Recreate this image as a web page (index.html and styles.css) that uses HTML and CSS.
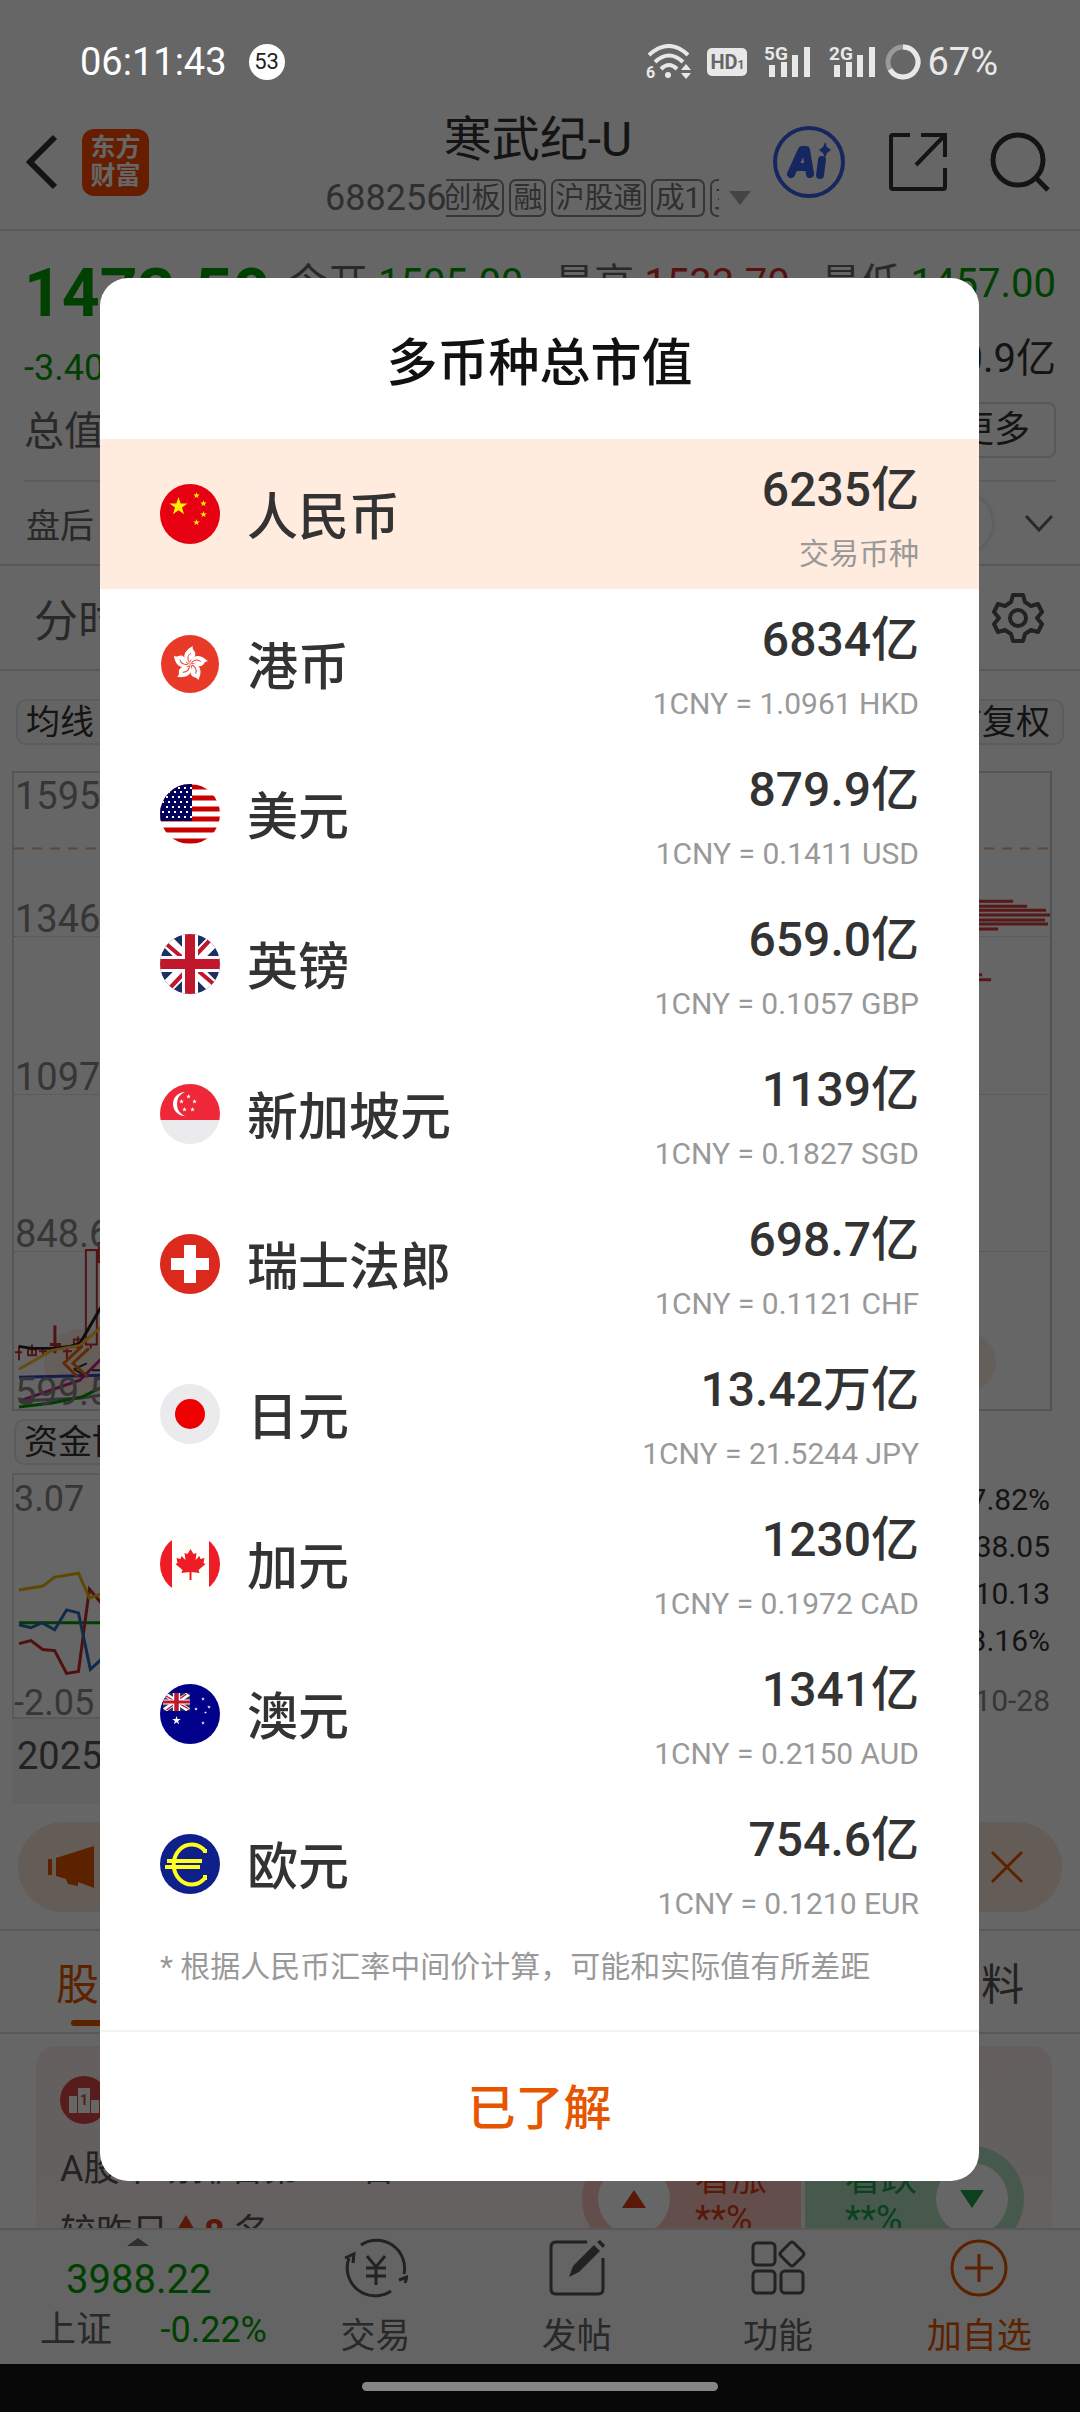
FILE: index.html
```html
<!DOCTYPE html>
<html lang="zh-CN">
<head>
    <meta charset="UTF-8">
    <meta name="viewport" content="width=device-width, initial-scale=1.0">
    <title>寒武纪-U 多币种总市值</title>
    <link rel="stylesheet" href="styles.css">
</head>
<body>
    <!-- 公用图形 -->
    <svg class="sprite" aria-hidden="true">
        <symbol id="star" viewBox="-1 -1 2 2">
            <polygon points="0,-1 .225,-.309 .951,-.309 .363,.118 .588,.809 0,.382 -.588,.809 -.363,.118 -.951,-.309 -.225,-.309"/>
        </symbol>
        <symbol id="jack" viewBox="0 0 60 60" preserveAspectRatio="none">
            <rect width="60" height="60" fill="#1e2f63"/>
            <path d="M4 4 56 56M56 4 4 56" stroke="#fff" stroke-width="13"/>
            <path d="M4 8 24 25M52 4 34 23M8 56 26 37M56 52 36 35" stroke="#c0172d" stroke-width="4"/>
            <path d="M30 0V60M0 30H60" stroke="#fff" stroke-width="16"/>
            <path d="M30 0V60M0 30H60" stroke="#c0172d" stroke-width="10"/>
        </symbol>
    </svg>

    <div class="status-bar">
        <div class="status-left">
            <span class="time">06:11:43</span>
            <span class="count">53</span>
        </div>
        <div class="status-right">
            <svg class="wifi" viewBox="0 0 46 36" fill="none" stroke="#e8e8e8" stroke-width="4">
                <path d="M3 11Q23-7 42 11M9 18Q23 5 37 18M15 25Q23 17 31 25"/>
                <circle cx="22" cy="31" r="3" fill="#e8e8e8" stroke="none"/>
                <path d="M35 26l5-6 5 6zM35 29l5 6 5-6z" fill="#e8e8e8" stroke="none"/>
                <text x="0" y="34" class="tiny">6</text>
            </svg>
            <span class="hd">HD<small>1</small></span>
            <svg class="signal" viewBox="0 0 48 36" fill="#e8e8e8">
                <text x="0" y="16" class="net">5G</text>
                <path d="M5 21h6v12h-6zM17 18h6v15h-6zM28 11h6v22h-6zM40 3h6v30h-6z"/>
            </svg>
            <svg class="signal" viewBox="0 0 48 36" fill="#e8e8e8">
                <text x="0" y="16" class="net">2G</text>
                <path d="M5 21h6v12h-6zM17 18h6v15h-6zM28 11h6v22h-6zM40 3h6v30h-6z"/>
            </svg>
            <svg class="battery" viewBox="0 0 36 36" fill="none" stroke-width="5">
                <circle cx="18" cy="18" r="15" stroke="#999"/>
                <path d="M18 3A15 15 0 1 1 5 25.5" stroke="#e8e8e8"/>
            </svg>
            <span class="percent">67%</span>
        </div>
    </div>

    <header class="top-bar">
        <div class="top-left">
            <button class="icon-btn" aria-label="返回">
                <svg width="32" height="56" viewBox="0 0 32 56" fill="none" stroke="#333" stroke-width="6"><path d="M29 3 4 28l25 25"/></svg>
            </button>
            <span class="logo">东方<br>财富</span>
        </div>
        <div class="stock">
            <h1>寒武纪-U</h1>
            <div class="stock-sub">
                <span class="code">688256</span>
                <div class="tags">
                    <span class="tag">科创板</span>
                    <span class="tag">融</span>
                    <span class="tag">沪股通</span>
                    <span class="tag">成1</span>
                    <span class="tag">主</span>
                </div>
                <span class="drop"></span>
            </div>
        </div>
        <div class="top-right">
            <button class="icon-btn" aria-label="AI">
                <svg width="74" height="74" viewBox="0 0 74 74">
                    <circle cx="37" cy="37" r="34" fill="none" stroke="#3763f0" stroke-width="4"/>
                    <path d="M19 49 30 25h4l4 24M24 42h13" fill="none" stroke="#3763f0" stroke-width="8" stroke-linejoin="round" stroke-linecap="round"/>
                    <path d="M50 35l-2 15" stroke="#3763f0" stroke-width="8" stroke-linecap="round"/>
                    <path d="M53 17l2 5 4 3-4 3-2 5-2-5-4-3 4-3z" fill="#3763f0"/>
                </svg>
            </button>
            <button class="icon-btn" aria-label="分享">
                <svg width="60" height="60" viewBox="0 0 60 60" fill="none" stroke="#333" stroke-width="4"><path d="M22 3H5q-2 0-2 2v50q0 2 2 2h50q2 0 2-2V36M33 3h24v22M57 3 28 33"/></svg>
            </button>
            <button class="icon-btn" aria-label="搜索">
                <svg width="60" height="60" viewBox="0 0 60 60" fill="none" stroke="#333" stroke-width="5"><circle cx="28" cy="28" r="25"/><path d="M46 46l12 12"/></svg>
            </button>
        </div>
    </header>

    <main>
        <section class="quote">
            <div class="quote-left">
                <strong class="price">1473.50</strong>
                <span class="change">-3.40%</span>
                <span class="total">总值</span>
            </div>
            <div class="quote-right">
                <div class="line">
                    <span>今开 <b class="green">1505.00</b></span>
                    <span>最高 <b class="red">1533.70</b></span>
                    <span>最低 <b class="green">1457.00</b></span>
                </div>
                <div class="line end"><span class="dark">180.9亿</span></div>
                <div class="line end"><button class="more">更多</button></div>
            </div>
        </section>

        <section class="after">
            <span>盘后</span>
            <span class="knob"></span>
            <svg width="30" height="18" viewBox="0 0 30 18" fill="none" stroke="#666" stroke-width="3"><path d="M2 2l13 14L28 2"/></svg>
        </section>

        <nav class="periods">
            <span>分时</span>
            <svg width="52" height="52" viewBox="0 0 52 52" fill="none" stroke="#555" stroke-width="4" stroke-linejoin="round">
                <path d="M21 3h10l2 7 6 4 7-2 4 8-5 6 5 6-4 8-7-2-6 4-2 7H21l-2-7-6-4-7 2-4-8 5-6-5-6 4-8 7 2 6-4z"/>
                <circle cx="26" cy="26" r="8"/>
            </svg>
        </nav>

        <div class="chips">
            <button class="chip">均线</button>
            <button class="chip">前复权</button>
        </div>

        <section class="chart">
            <svg class="plot" viewBox="0 0 1038 640" preserveAspectRatio="none" fill="none" stroke-width="2">
                <ellipse cx="68" cy="594" rx="38" ry="35" fill="#fdeee6"/>
                <circle cx="954" cy="593" r="30" fill="#fdeee6"/>
                <path d="M0 76H1038" stroke="#e8b48a" stroke-dasharray="10 8"/>
                <g stroke="#d03030">
                    <path d="M5 576v15M1 583h7M14 580h8v6h-8zM18 575v12M25 582h8M29 578v8M53 578v13M49 582h9M60 570h8v7h-8zM72 480h11v95H72zM85 473h14v19H85zM64 567v14M77 575v4"/>
                    <path d="M41 556v28M36 575h11" stroke-width="3"/>
                </g>
                <path d="M5 577l13 2h20l18-2 10-3 22-38" stroke="#222" stroke-width="3"/>
                <path d="M5 600l33-19 28-5 22-19" stroke="#ffbe33" stroke-width="3"/>
                <path d="M5 608l83-2" stroke="#3344cc" stroke-width="3"/>
                <path d="M5 632l61-21 22-22" stroke="#cc2288" stroke-width="3"/>
                <path d="M5 632l63-3 20-3" stroke="#888" stroke-width="3"/>
                <path d="M5 638l33-4 30-6 20-10" stroke="#009900" stroke-width="3"/>
                <path d="M60 600l13-6M60 600l12 7M78 601h10" stroke="#333"/>
                <path d="M68 577 50 594l14 14M75 579 59 594l15 14" stroke="#f06a10" stroke-width="3"/>
                <path d="M900 129h101M900 134h115M900 138h134M900 143h138M900 148h133M900 152h136M900 157h86M900 203h70M900 208h79" stroke="#d63c3c" stroke-width="3"/>
            </svg>
            <div class="band first"><span>1595.00</span><span>1346.12</span></div>
            <div class="band"><span>1097.25</span></div>
            <div class="band"><span>848.6</span></div>
            <div class="band"><span>599.5</span></div>
        </section>

        <div class="sub-chips">
            <button class="chip">资金博弈</button>
        </div>

        <section class="fund">
            <div class="fund-main">
                <div class="fund-chart">
                    <svg class="plot" viewBox="0 0 700 244" preserveAspectRatio="xMinYMin meet" fill="none" stroke-width="3">
                        <path d="M5 149h690" stroke="#009900"/>
                        <path d="M5 170l12-3 12 9 12 1 12 23 12-2 11-83 12 14" stroke="#c82828"/>
                        <path d="M5 151l12 3 11-5 13 7 12-20 12 3 12 57 11-10" stroke="#2a6ab8"/>
                        <path d="M5 116l24-4 12-9 12-2 12-2 11 25 12-4" stroke="#e8b800"/>
                    </svg>
                    <span>3.07</span>
                    <span>-2.05</span>
                </div>
                <div class="dates">20250828</div>
            </div>
            <div class="fund-side">
                <span>7.82%</span>
                <span>38.05</span>
                <span>10.13</span>
                <span>3.16%</span>
                <span class="day">10-28</span>
            </div>
        </section>

        <div class="notice">
            <svg width="50" height="42" viewBox="0 0 50 42" fill="#e65500"><path d="M0 13h4v16H0zM8 12 46 0v42l-16-6v4l-10-2-2-5-10-3z"/></svg>
            <button class="icon-btn" aria-label="关闭">
                <svg width="34" height="34" viewBox="0 0 34 34" stroke="#e65500" stroke-width="3"><path d="M2 2l30 30M32 2 2 32"/></svg>
            </button>
        </div>

        <nav class="tabs">
            <a href="#" class="tab active">股吧</a>
            <a href="#" class="tab">资料</a>
        </nav>

        <section class="cards">
            <div class="rank">
                <svg width="48" height="48" viewBox="0 0 48 48"><circle cx="24" cy="24" r="24" fill="#d94a48"/><path d="M9 20h8v17H9zM18 12h12v25H18zM31 24h8v13h-8z" fill="#fff"/><text x="20" y="29" class="one">1</text></svg>
                <p>A股市场排名第 <b>44</b> 名</p>
                <p>较昨日<b>▲8</b> 名</p>
            </div>
            <div class="vote">
                <div class="side up">
                    <span class="ball"><svg width="24" height="18" viewBox="0 0 24 18" fill="#e03c14"><path d="M12 0 24 18H0z"/></svg></span>
                    <span>看涨<br>**%</span>
                </div>
                <div class="side down">
                    <span>看跌<br>**%</span>
                    <span class="ball"><svg width="24" height="18" viewBox="0 0 24 18" fill="#1ea04b"><path d="M0 0h24L12 18z"/></svg></span>
                </div>
            </div>
        </section>
    </main>

    <footer class="bottom-bar">
        <div class="index">
            <span class="caret"></span>
            <span class="index-value">3988.22</span>
            <div class="index-row"><span>上证</span><span class="green">-0.22%</span></div>
        </div>
        <button class="action">
            <svg viewBox="0 0 64 60" fill="none" stroke="#555" stroke-width="3">
                <path d="M17 7A28 28 0 0 1 60 36M47 53A28 28 0 0 1 5 20M1 20l9-4-1 9M55 42l8-3-2 6M23 18l9 11 9-11M32 29v18M22 30h20M22 38h20"/>
            </svg>
            交易
        </button>
        <button class="action">
            <svg viewBox="0 0 64 60" fill="none" stroke="#555" stroke-width="3">
                <path d="M42 4H11q-5 0-5 5v42q0 5 5 5h42q5 0 5-5V20"/>
                <path d="M24 39l4-11L49 7l6 6-21 21zM52 4l3-2 5 5-2 3z" fill="#555" stroke="none"/>
            </svg>
            发帖
        </button>
        <button class="action">
            <svg viewBox="0 0 64 60" fill="none" stroke="#555" stroke-width="3">
                <rect x="7" y="5" width="22" height="22" rx="4"/><rect x="7" y="33" width="22" height="22" rx="4"/><rect x="35" y="33" width="22" height="22" rx="4"/>
                <path d="M44 5q2-2 4 0l9 9q2 2 0 4l-9 9q-2 2-4 0l-9-9q-2-2 0-4z"/>
            </svg>
            功能
        </button>
        <button class="action add">
            <svg viewBox="0 0 64 60" fill="none" stroke="#e65500" stroke-width="3"><circle cx="32" cy="30" r="27"/><path d="M32 16v28M18 30h28"/></svg>
            加自选
        </button>
    </footer>
    <div class="system-nav"><span></span></div>

    <!-- 弹窗 -->
    <div class="mask">
        <div class="dialog" role="dialog" aria-labelledby="dialog-title">
            <h2 id="dialog-title">多币种总市值</h2>
            <ul>
                <li class="current">
                    <svg class="flag" viewBox="0 0 60 60"><rect width="60" height="60" fill="#e60012"/>
                        <g fill="#fff000"><use href="#star" x="9" y="13" width="19" height="19"/><use href="#star" x="33" y="8" width="7" height="7"/><use href="#star" x="40" y="16" width="7" height="7"/><use href="#star" x="40" y="27" width="7" height="7"/><use href="#star" x="33" y="35" width="7" height="7"/></g>
                    </svg>
                    <span class="name">人民币</span>
                    <div class="amount"><strong>6235亿</strong><span>交易币种</span></div>
                </li>
                <li>
                    <svg class="flag" viewBox="0 0 60 60"><circle cx="30" cy="30" r="29" fill="#e93928"/>
                        <g fill="#fff">
                            <path id="petal" d="M30 30C23 27 21 18 33 12C31 16 37 17 35 22C33 26 28 25 30 30z"/>
                            <use href="#petal" transform="rotate(72 30 30)"/><use href="#petal" transform="rotate(144 30 30)"/><use href="#petal" transform="rotate(216 30 30)"/><use href="#petal" transform="rotate(288 30 30)"/>
                        </g>
                        <g stroke="#e93928" fill="none">
                            <path id="vein" d="M29 28C27 24 28 21 31 19"/>
                            <use href="#vein" transform="rotate(72 30 30)"/><use href="#vein" transform="rotate(144 30 30)"/><use href="#vein" transform="rotate(216 30 30)"/><use href="#vein" transform="rotate(288 30 30)"/>
                        </g>
                    </svg>
                    <span class="name">港币</span>
                    <div class="amount"><strong>6834亿</strong><span>1CNY = 1.0961 HKD</span></div>
                </li>
                <li>
                    <svg class="flag" viewBox="0 0 60 60"><rect width="60" height="60" fill="#fff"/>
                        <path d="M0 3H60M0 14H60M0 25H60M0 35H60M0 46H60M0 57H60" stroke="#c80000" stroke-width="5"/>
                        <rect width="32" height="37" fill="#00005c"/>
                        <path d="M18 4H32M2 8H32M6 13H32M2 18H32M6 23H32M2 28H32M6 33H32" stroke="#fff" stroke-width="2" stroke-dasharray="2 4"/>
                    </svg>
                    <span class="name">美元</span>
                    <div class="amount"><strong>879.9亿</strong><span>1CNY = 0.1411 USD</span></div>
                </li>
                <li>
                    <svg class="flag" viewBox="0 0 60 60"><use href="#jack" width="60" height="60"/></svg>
                    <span class="name">英镑</span>
                    <div class="amount"><strong>659.0亿</strong><span>1CNY = 0.1057 GBP</span></div>
                </li>
                <li>
                    <svg class="flag" viewBox="0 0 60 60"><rect width="60" height="60" fill="#ebebed"/><rect width="60" height="36" fill="#ee2839"/>
                        <path d="M25 8A12 12 0 1 0 25 32A13 13 0 0 1 25 8z" fill="#fff"/>
                        <g fill="#fff"><use href="#star" x="26" y="10" width="5" height="5"/><use href="#star" x="19" y="15" width="5" height="5"/><use href="#star" x="32" y="15" width="5" height="5"/><use href="#star" x="22" y="23" width="5" height="5"/><use href="#star" x="30" y="23" width="5" height="5"/></g>
                    </svg>
                    <span class="name">新加坡元</span>
                    <div class="amount"><strong>1139亿</strong><span>1CNY = 0.1827 SGD</span></div>
                </li>
                <li>
                    <svg class="flag" viewBox="0 0 60 60"><rect width="60" height="60" fill="#dc291e"/><path d="M30 11V49M11 30H49" stroke="#fff" stroke-width="12"/></svg>
                    <span class="name">瑞士法郎</span>
                    <div class="amount"><strong>698.7亿</strong><span>1CNY = 0.1121 CHF</span></div>
                </li>
                <li>
                    <svg class="flag" viewBox="0 0 60 60"><rect width="60" height="60" fill="#ebebed"/><circle cx="30" cy="30" r="15" fill="#ee0000"/></svg>
                    <span class="name">日元</span>
                    <div class="amount"><strong>13.42万亿</strong><span>1CNY = 21.5244 JPY</span></div>
                </li>
                <li>
                    <svg class="flag" viewBox="0 0 60 60"><rect width="60" height="60" fill="#fffefa"/><path d="M0 0H12V60H0zM49 0H60V60H49z" fill="#ee1c25"/>
                        <path d="M30.500 15l-3 5-3-1 1 7-4-4-1 3-4-1 1 5-2 1 7 6-1 3 8-1v8h2v-8l8 1-1-3 7-6-2-1 1-5-4 1-1-3-4 4 1-7-3 1z" fill="#ee1c25"/>
                    </svg>
                    <span class="name">加元</span>
                    <div class="amount"><strong>1230亿</strong><span>1CNY = 0.1972 CAD</span></div>
                </li>
                <li>
                    <svg class="flag" viewBox="0 0 60 60"><rect width="60" height="60" fill="#00008b"/><use href="#jack" x="3" y="9" width="27" height="18"/>
                        <g fill="#fff"><use href="#star" x="12" y="32" width="9" height="9"/><use href="#star" x="41" y="13" width="4" height="4"/><use href="#star" x="34" y="23" width="4" height="4"/><use href="#star" x="47" y="21" width="4" height="4"/><use href="#star" x="44" y="27" width="3" height="3"/><use href="#star" x="41" y="37" width="4" height="4"/></g>
                    </svg>
                    <span class="name">澳元</span>
                    <div class="amount"><strong>1341亿</strong><span>1CNY = 0.2150 AUD</span></div>
                </li>
                <li>
                    <svg class="flag" viewBox="0 0 60 60"><rect width="60" height="60" fill="#10208a"/>
                        <path d="M45 17A18 20 0 1 0 45 44M45 15v4M45 41v5M7 27H42M5 33H40" fill="none" stroke="#ffff1e" stroke-width="4"/>
                    </svg>
                    <span class="name">欧元</span>
                    <div class="amount"><strong>754.6亿</strong><span>1CNY = 0.1210 EUR</span></div>
                </li>
            </ul>
            <p class="remark">* 根据人民币汇率中间价计算，可能和实际值有所差距</p>
            <button class="confirm">已了解</button>
        </div>
    </div>
</body>
</html>
```
FILE: styles.css
```css
* {
    margin: 0;
    padding: 0;
    box-sizing: border-box;
}
body {
    font-family: Roboto, "Noto Sans CJK SC", sans-serif;
    background: #fff;
    color: #333;
    height: 100vh;
    display: flex;
    flex-direction: column;
    position: relative;
    overflow: hidden;
}
button {
    font-family: inherit;
    color: inherit;
    background: none;
    border: none;
    cursor: pointer;
}
svg {
    display: block;
    flex: none;
}
.sprite {
    position: absolute;
    width: 0;
    height: 0;
}
.green {
    color: #00a000;
}
.red {
    color: #d92b2b;
}

/* 状态栏 */
.status-bar {
    position: relative;
    z-index: 3;
    height: 95px;
    padding: 29px 82px 0 80px;
    display: flex;
    justify-content: space-between;
    align-items: center;
    color: #fff;
    font-size: 38px;
    flex: none;
}
.status-left,
.status-right {
    display: flex;
    align-items: center;
}
.count {
    width: 36px;
    height: 36px;
    margin-left: 22px;
    border-radius: 50%;
    background: #fff;
    color: #222;
    font-size: 22px;
    line-height: 36px;
    text-align: center;
}
.status-right {
    color: #e8e8e8;
}
.wifi {
    width: 46px;
    height: 36px;
}
.tiny {
    font-size: 16px;
    font-weight: bold;
    fill: #e8e8e8;
    stroke: none;
}
.hd {
    margin-left: 15px;
    width: 40px;
    height: 28px;
    border-radius: 5px;
    background: #e8e8e8;
    color: #666;
    font-size: 20px;
    font-weight: bold;
    line-height: 28px;
    text-align: center;
    white-space: nowrap;
}
.hd small {
    font-size: 12px;
}
.signal {
    width: 48px;
    height: 36px;
    margin-left: 17px;
}
.net {
    font-size: 19px;
    font-weight: bold;
}
.battery {
    width: 36px;
    height: 36px;
    margin: 0 6px 0 8px;
}

/* 顶部 */
.top-bar {
    height: 136px;
    padding: 0 30px 0 26px;
    border-bottom: 2px solid #e2e2e2;
    display: grid;
    grid-template-columns: 1fr auto 1fr;
    align-items: center;
    flex: none;
}
.top-left {
    display: flex;
    align-items: center;
    gap: 24px;
}
.logo {
    width: 67px;
    height: 67px;
    padding-top: 5px;
    border-radius: 12px;
    background: #ff4a00;
    color: #fff;
    font-size: 25px;
    font-weight: bold;
    line-height: 28px;
    text-align: center;
}
.stock {
    text-align: center;
    width: 426px;
    padding-top: 5px;
}
.stock h1 {
    font-size: 48px;
    font-weight: normal;
    line-height: 66px;
}
.stock-sub {
    display: flex;
    align-items: center;
    height: 50px;
    color: #777;
}
.code {
    font-size: 36px;
}
.tags {
    flex: 1;
    display: flex;
    gap: 5px;
    overflow: hidden;
}
.tag {
    border: 2px solid #888;
    border-radius: 7px;
    padding: 0 2px;
    font-size: 29px;
    line-height: 34px;
    white-space: nowrap;
}
.tag:first-child {
    margin-left: -37px;
}
.drop {
    margin-left: 10px;
    border: 11px solid transparent;
    border-top: 14px solid #aaa;
    border-bottom: 0;
}
.top-right {
    display: flex;
    justify-content: flex-end;
    align-items: center;
    gap: 42px;
}

main {
    flex: 1;
    min-height: 0;
    overflow: hidden;
}

/* 行情 */
.quote {
    margin: 0 24px;
    padding: 11px 0 13px;
    display: flex;
    border-bottom: 2px solid #e6e6e6;
    color: #666;
    font-size: 40px;
}
.quote-left {
    width: 264px;
    padding-top: 14px;
    display: flex;
    flex-direction: column;
    color: #00a000;
}
.price {
    font-size: 66px;
    line-height: 75px;
}
.change {
    font-size: 36px;
    line-height: 75px;
}
.total {
    color: #666;
    line-height: 51px;
}
.quote-right {
    flex: 1;
}
.line {
    height: 75px;
    display: flex;
    align-items: center;
    justify-content: space-between;
    white-space: nowrap;
}
.line b {
    font-weight: normal;
}
.end {
    justify-content: flex-end;
}
.dark {
    color: #333;
}
.more {
    width: 124px;
    height: 56px;
    border: 2px solid #ddd;
    border-radius: 8px;
    font-size: 36px;
    line-height: 50px;
    color: #333;
}
.after {
    height: 84px;
    padding: 0 26px;
    display: flex;
    align-items: center;
    border-bottom: 2px solid #ddd;
    color: #666;
    font-size: 34px;
}
.knob {
    width: 60px;
    height: 60px;
    margin: 0 32px 0 auto;
    border-radius: 50%;
    box-shadow: 0 0 6px #ccc;
}
.periods {
    height: 105px;
    padding: 0 36px 0 34px;
    display: flex;
    align-items: center;
    justify-content: space-between;
    border-bottom: 2px solid #ddd;
    color: #666;
    font-size: 44px;
}
.chips {
    display: flex;
    justify-content: space-between;
    padding: 28px 16px 26px;
}
.chip {
    height: 46px;
    padding: 0 12px 0 8px;
    border: 2px solid #e6e6e6;
    border-radius: 10px;
    background: #fafafa;
    font-size: 34px;
    line-height: 40px;
}

/* 图表 */
.chart {
    position: relative;
    height: 640px;
    margin: 0 28px 0 12px;
    border: 2px solid #d8d8d8;
    border-right-color: #ccc;
    display: flex;
    flex-direction: column;
    color: #888;
    font-size: 38px;
    line-height: 34px;
}
.plot {
    position: absolute;
    inset: 0;
    width: 100%;
    height: 100%;
}
.band {
    flex: 1;
    padding-left: 1px;
    display: flex;
    flex-direction: column;
    justify-content: flex-end;
    border-bottom: 1px dotted #ccc;
}
.band:last-child {
    border-bottom: none;
}
.band span,
.fund-chart span {
    position: relative;
}
.first {
    padding-top: 6px;
    justify-content: space-between;
}
.sub-chips {
    padding: 8px 14px 8px;
    display: flex;
}
.fund {
    display: flex;
    padding: 0 30px 0 12px;
}
.fund-main {
    flex: 1;
}
.fund-chart {
    position: relative;
    height: 246px;
    padding: 10px 0 0;
    border: 2px solid #e2e2e2;
    display: flex;
    flex-direction: column;
    justify-content: space-between;
    color: #888;
    font-size: 36px;
    line-height: 28px;
}
.dates {
    height: 85px;
    padding-left: 5px;
    background: #f5f5f5;
    color: #555;
    font-size: 38px;
    line-height: 74px;
}
.fund-side {
    width: 300px;
    padding-top: 3px;
    display: flex;
    flex-direction: column;
    align-items: flex-end;
    font-size: 30px;
    line-height: 47px;
}
.day {
    margin-top: 13px;
    color: #888;
}
.notice {
    height: 90px;
    margin: 18px 18px 17px;
    padding: 0 38px 0 30px;
    border-radius: 45px;
    background: #fbe6da;
    display: flex;
    align-items: center;
    justify-content: space-between;
}
.tabs {
    height: 105px;
    padding: 0 56px;
    border-top: 2px solid #ddd;
    border-bottom: 2px solid #ddd;
    display: flex;
    justify-content: space-between;
}
.tab {
    padding-top: 24px;
    color: #555;
    font-size: 43px;
    line-height: 60px;
    text-decoration: none;
}
.active {
    color: #e65500;
}
.active::after {
    content: "";
    display: block;
    width: 56px;
    height: 6px;
    margin: 5px auto 0;
    border-radius: 3px;
    background: #e65500;
}
.cards {
    margin: 12px 28px 0 36px;
    padding: 30px 28px 0 24px;
    height: 260px;
    border-radius: 20px;
    background: linear-gradient(#fbeeec, #f9f4f2);
    display: flex;
    justify-content: space-between;
    font-size: 36px;
    color: #555;
}
.rank p {
    line-height: 64px;
}
.rank svg {
    margin-bottom: 13px;
}
.rank b {
    color: #e03c14;
}
.one {
    font-size: 14px;
    font-weight: bold;
    fill: #d94a48;
}
.vote {
    display: flex;
    gap: 4px;
    margin-top: 70px;
}
.side {
    width: 219px;
    height: 106px;
    padding: 0 16px;
    display: flex;
    align-items: center;
    justify-content: space-between;
    line-height: 40px;
}
.up {
    border-radius: 53px 0 0 53px;
    background: #f8c4bd;
    color: #e03c14;
    padding-right: 34px;
}
.down {
    border-radius: 0 53px 53px 0;
    background: #b2dcc0;
    color: #1ea04b;
    padding-left: 40px;
}
.ball {
    width: 72px;
    height: 72px;
    border-radius: 50%;
    background: #fff;
    display: flex;
    align-items: center;
    justify-content: center;
}

/* 底部 */
.bottom-bar {
    height: 136px;
    border-top: 2px solid #ddd;
    background: #f9f9f9;
    display: flex;
    flex: none;
    color: #666;
    font-size: 36px;
}
.index {
    width: 275px;
    padding-top: 8px;
}
.caret {
    display: block;
    width: 0;
    margin-left: 127px;
    border: 11px solid transparent;
    border-top: 0;
    border-bottom: 8px solid #777;
}
.index-value {
    display: block;
    padding: 7px 0 0 66px;
    color: #00a000;
    font-size: 40px;
    line-height: 54px;
}
.index-row {
    display: flex;
    justify-content: space-between;
    padding: 0 8px 0 40px;
    line-height: 46px;
}
.action {
    flex: 1;
    display: flex;
    flex-direction: column;
    align-items: center;
    padding-top: 8px;
    font-size: 35px;
    line-height: 78px;
}
.action svg {
    width: 64px;
    height: 60px;
}
.add {
    color: #e65500;
}
.system-nav {
    position: relative;
    z-index: 3;
    height: 48px;
    background: #080808;
    flex: none;
    padding-top: 18px;
}
.system-nav span {
    display: block;
    width: 33%;
    height: 9px;
    margin: 0 auto;
    border-radius: 5px;
    background: #858585;
}

/* 弹窗 */
.mask {
    position: absolute;
    inset: 0;
    z-index: 2;
    padding: 278px 101px 0 100px;
    background: rgba(0, 0, 0, 0.6);
}
.dialog {
    background: #fff;
    border-radius: 28px;
    overflow: hidden;
}
.dialog h2 {
    height: 161px;
    padding-top: 8px;
    color: #111;
    font-size: 51px;
    font-weight: 500;
    line-height: 156px;
    text-align: center;
}
.dialog ul {
    list-style: none;
}
.dialog li {
    height: 150px;
    padding: 0 60px;
    display: flex;
    align-items: center;
}
.current {
    background: #ffecdf;
}
.flag {
    width: 60px;
    height: 60px;
    border-radius: 50%;
    overflow: hidden;
}
.name {
    margin-left: 27px;
    padding-top: 7px;
    font-size: 51px;
    font-weight: 500;
    line-height: 75px;
}
.amount {
    margin-left: auto;
    display: flex;
    flex-direction: column;
    align-items: flex-end;
}
.amount strong {
    font-size: 48px;
    font-weight: 500;
    line-height: 80px;
}
.amount span {
    color: #999;
    font-size: 30px;
    line-height: 48px;
}
.remark {
    height: 91px;
    padding-left: 60px;
    color: #999;
    font-size: 30px;
    line-height: 56px;
}
.confirm {
    width: 100%;
    height: 151px;
    padding-bottom: 6px;
    border-top: 2px solid #f2f2f2;
    color: #e65500;
    font-size: 48px;
    font-weight: 500;
}
```
